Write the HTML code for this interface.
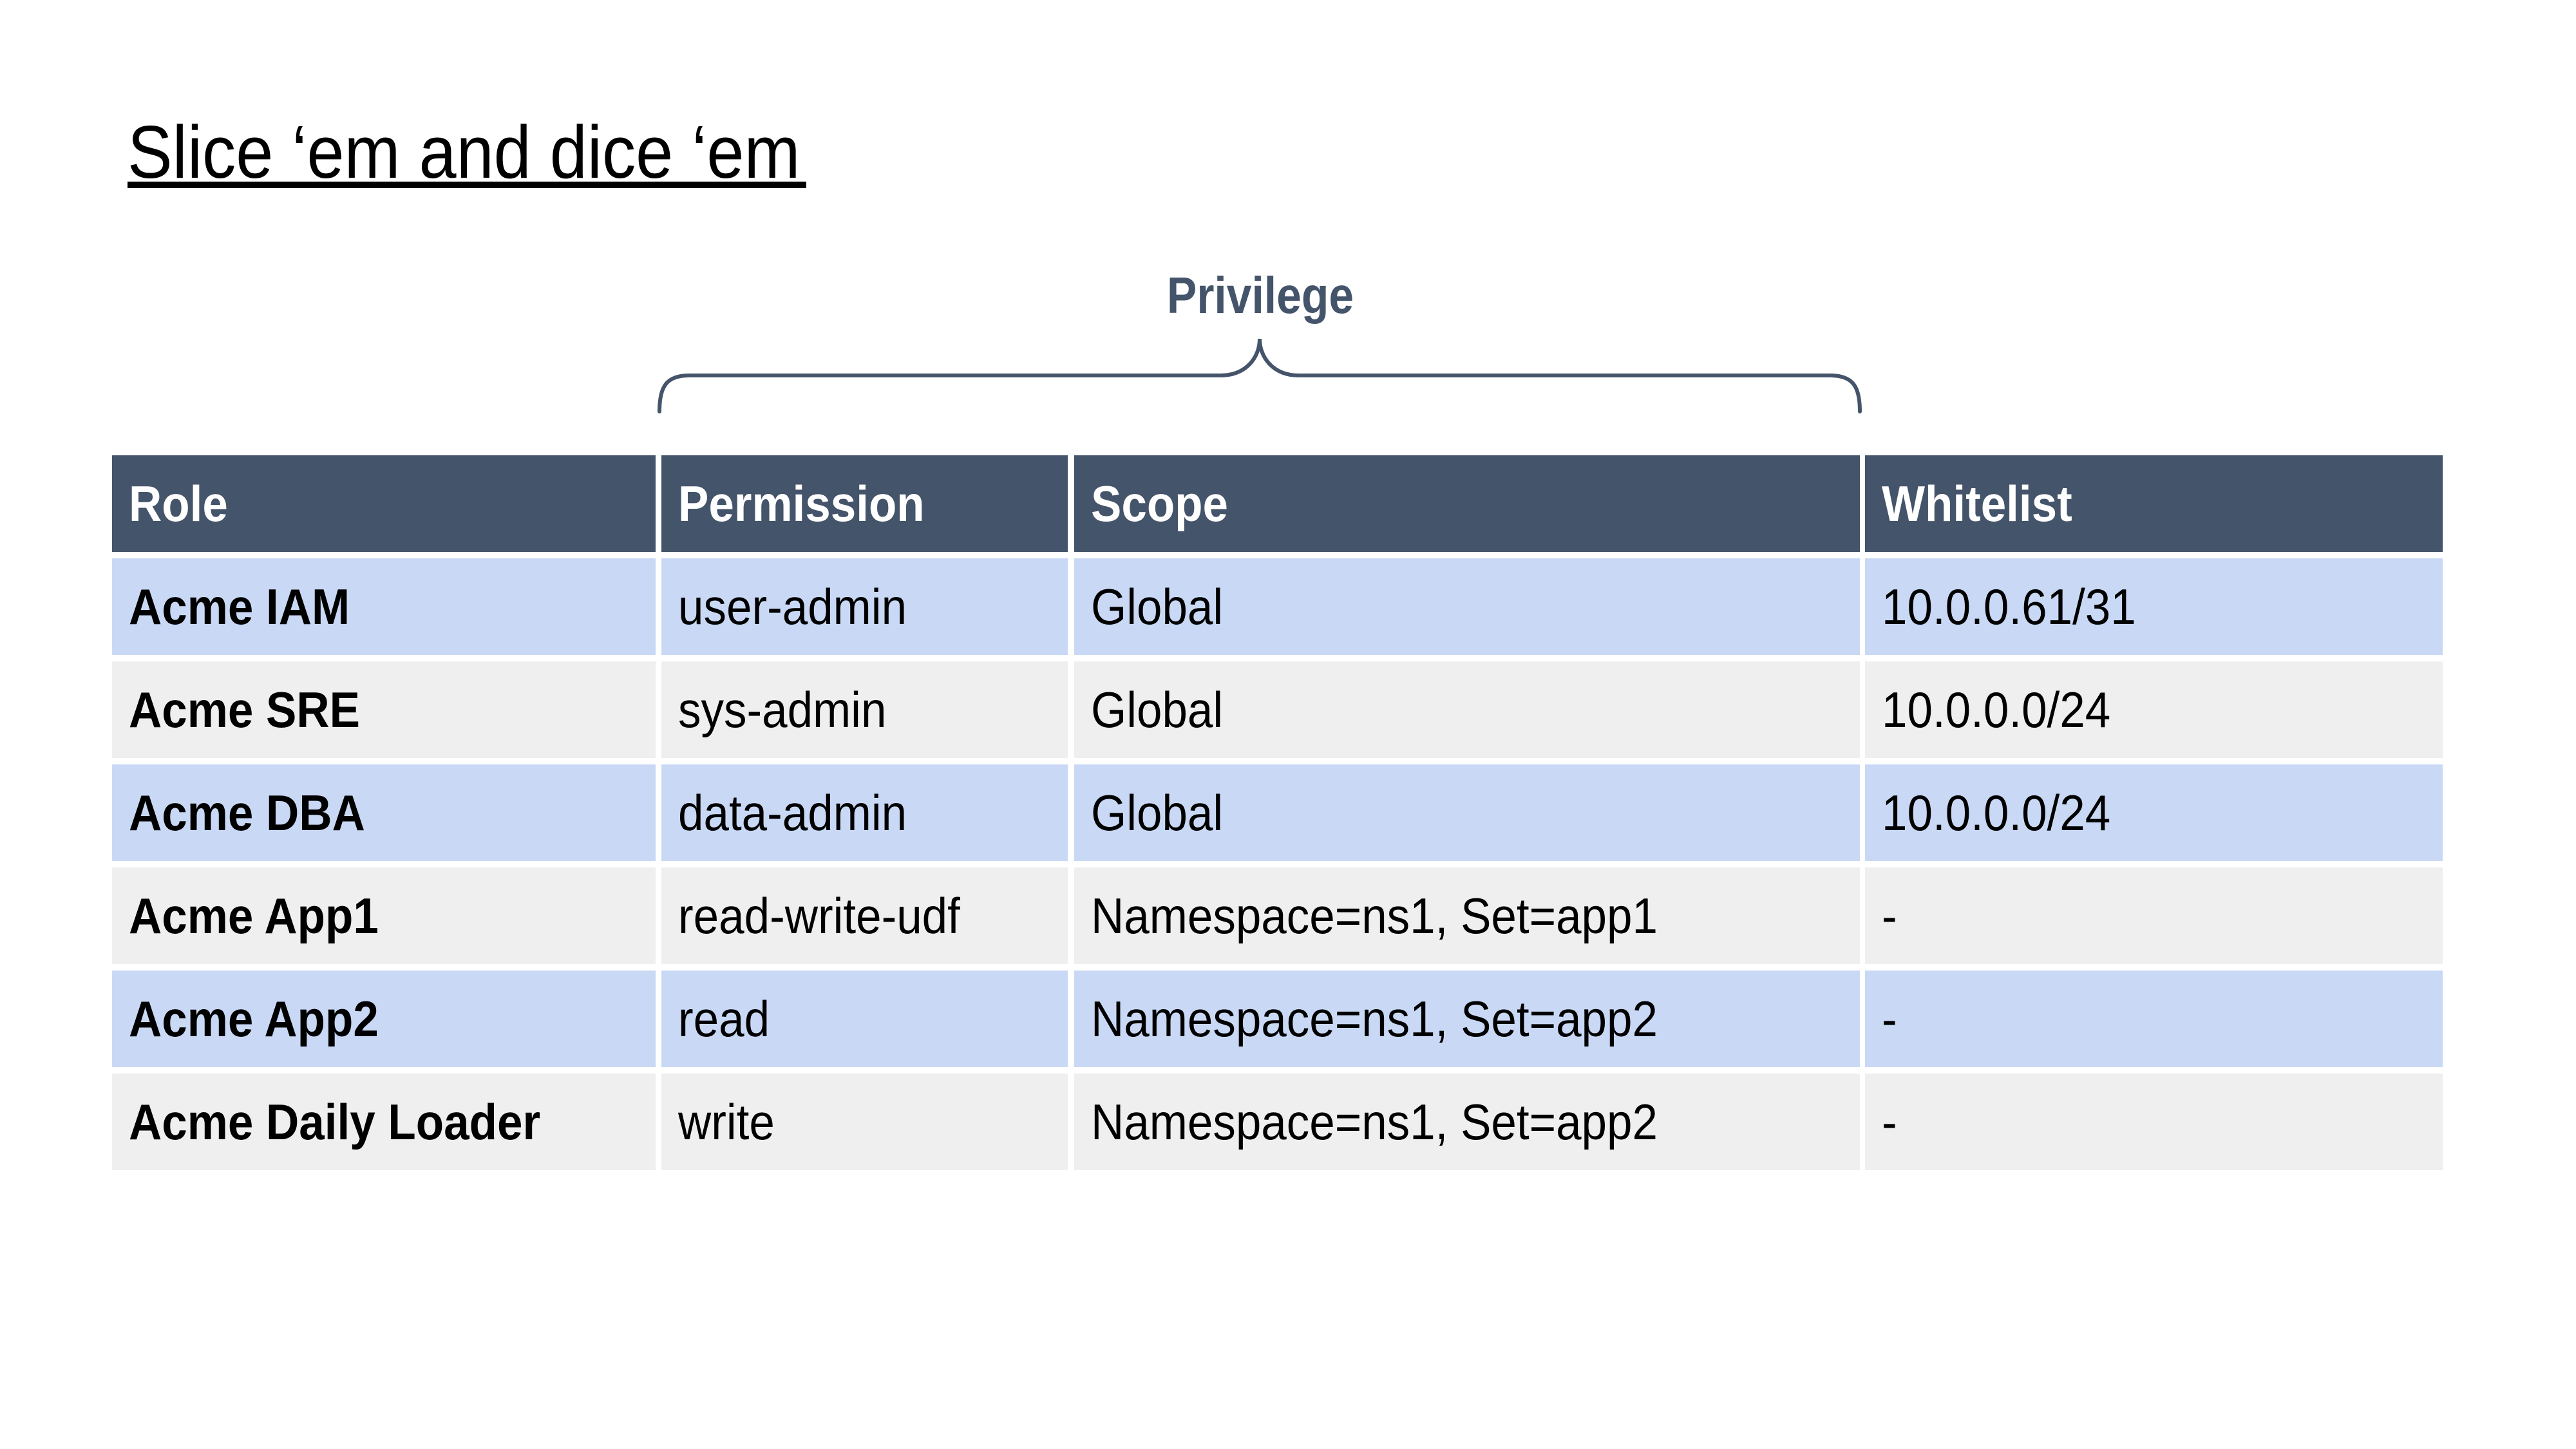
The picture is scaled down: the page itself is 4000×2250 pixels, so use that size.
<!DOCTYPE html>
<html><head><meta charset="utf-8"><style>
*{margin:0;padding:0;box-sizing:border-box}
html,body{width:4000px;height:2250px;background:#fff;overflow:hidden;font-family:"Liberation Sans",sans-serif}
.a{position:absolute}
.r{position:absolute;left:0;width:4000px;height:150px}
.c{position:absolute;top:0;height:150px}
.c1{left:174px;width:844px}.c2{left:1027px;width:631px}.c3{left:1668px;width:1220px}.c4{left:2896px;width:897px}
.t{position:absolute;top:36px;left:26px;font-size:78px;line-height:78px;white-space:nowrap;transform:scaleX(.91);transform-origin:left center;color:#000}
.h .c{background:#44546a}.h .t{color:#fff;font-weight:bold}
.b .c{background:#c9d9f5}
.g .c{background:#efefef}
.c1 .t{font-weight:bold}
</style></head><body>
<div class="a" style="left:198px;top:178px;font-size:116px;line-height:116px;white-space:nowrap;transform:scaleX(.9);transform-origin:left center">Slice ‘em and dice ‘em</div>
<div class="a" style="left:198px;top:282px;width:1054px;height:10px;background:#000"></div>
<div class="a" style="left:1657px;top:419px;width:600px;text-align:center;font-size:80px;line-height:80px;font-weight:bold;color:#44546a;transform:scaleX(.87);transform-origin:center">Privilege</div>
<svg class="a" style="left:0;top:0" width="4000" height="700"><path d="M1024 639 C1024 600 1035 583 1070 583 L1895 583 C1935 583 1956 555 1956 526 C1956 555 1977 583 2017 583 L2842 583 C2877 583 2888 600 2888 639" fill="none" stroke="#44546a" stroke-width="6" stroke-linecap="round"/></svg>

<div class="r h" style="top:707px"><div class="c c1"><div class="t">Role</div></div><div class="c c2"><div class="t">Permission</div></div><div class="c c3"><div class="t">Scope</div></div><div class="c c4"><div class="t">Whitelist</div></div></div>
<div class="r b" style="top:867px"><div class="c c1"><div class="t">Acme IAM</div></div><div class="c c2"><div class="t">user-admin</div></div><div class="c c3"><div class="t">Global</div></div><div class="c c4"><div class="t">10.0.0.61/31</div></div></div>
<div class="r g" style="top:1027px"><div class="c c1"><div class="t">Acme SRE</div></div><div class="c c2"><div class="t">sys-admin</div></div><div class="c c3"><div class="t">Global</div></div><div class="c c4"><div class="t">10.0.0.0/24</div></div></div>
<div class="r b" style="top:1187px"><div class="c c1"><div class="t">Acme DBA</div></div><div class="c c2"><div class="t">data-admin</div></div><div class="c c3"><div class="t">Global</div></div><div class="c c4"><div class="t">10.0.0.0/24</div></div></div>
<div class="r g" style="top:1347px"><div class="c c1"><div class="t">Acme App1</div></div><div class="c c2"><div class="t">read-write-udf</div></div><div class="c c3"><div class="t">Namespace=ns1, Set=app1</div></div><div class="c c4"><div class="t">-</div></div></div>
<div class="r b" style="top:1507px"><div class="c c1"><div class="t">Acme App2</div></div><div class="c c2"><div class="t">read</div></div><div class="c c3"><div class="t">Namespace=ns1, Set=app2</div></div><div class="c c4"><div class="t">-</div></div></div>
<div class="r g" style="top:1667px"><div class="c c1"><div class="t">Acme Daily Loader</div></div><div class="c c2"><div class="t">write</div></div><div class="c c3"><div class="t">Namespace=ns1, Set=app2</div></div><div class="c c4"><div class="t">-</div></div></div>
</body></html>
